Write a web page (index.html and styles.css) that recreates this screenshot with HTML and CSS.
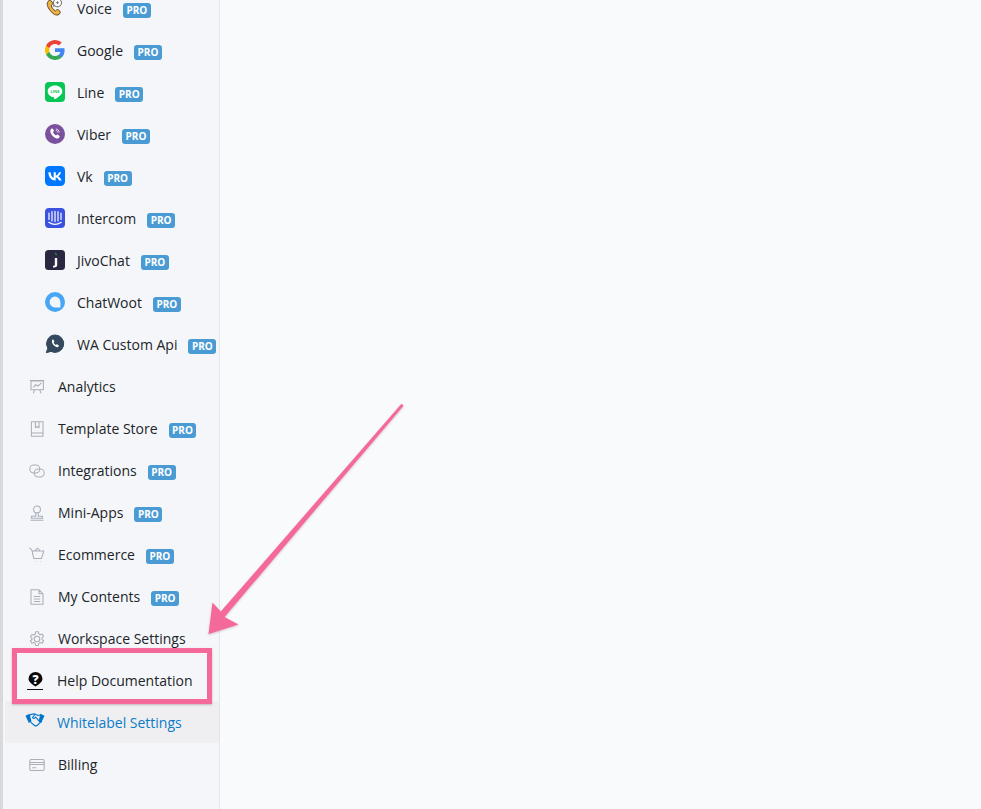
FILE: index.html
```html
<!DOCTYPE html>
<html lang="en">
<head>
<meta charset="utf-8">
<title>Whitelabel Settings</title>
<link rel="stylesheet" href="styles.css">
</head>
<body>
<div class="page">
  <div class="edge"></div>
  <nav class="sidebar">
    <ul class="menu">
      <li class="item sub"><svg class="icon" viewBox="0 0 20 20"><path d="M3 3.500c1-1.300 2.600-1.600 3.300-.6l1.300 2c.4.700.2 1.300-.4 1.800l-1 .8c.6 2.200 2 4.200 4.400 5.400l.9-.9c.6-.6 1.300-.6 1.900-.1l1.600 1.500c.7.800.3 2-1 3-2.500 1.800-6.500-.4-9-4.200C2.300 9.200 1.500 5.400 3 3.500z" fill="#eeb042" stroke="#4a3a1c" stroke-width=".9"/><path d="M12.500.8a4 4 0 1 1-2.600 7l-1.400.5.500-1.400a4 4 0 0 1 3.500-6.100z" fill="#fff" stroke="#555" stroke-width=".9"/><path d="M10.800 4.700h3.200M12.500 3v3.200" stroke="#666" stroke-width=".8"/></svg><span>Voice</span><b class="pro">PRO</b></li>
      <li class="item sub"><svg class="icon" viewBox="0 0 20 20"><path d="M19.600 10.200c0-.7-.1-1.300-.2-1.900H10v3.800h5.400a4.600 4.600 0 0 1-2 3v2.500h3.200c1.900-1.700 3-4.300 3-7.400z" fill="#4285f4"/><path d="M10 20c2.700 0 5-.9 6.600-2.400l-3.200-2.500c-.9.600-2 1-3.400 1-2.600 0-4.800-1.800-5.600-4.100H1.100v2.600A10 10 0 0 0 10 20z" fill="#34a853"/><path d="M4.400 12a6 6 0 0 1 0-3.900V5.500H1.100a10 10 0 0 0 0 9.100z" fill="#fbbc05"/><path d="M10 4c1.500 0 2.800.5 3.800 1.500l2.900-2.900A10 10 0 0 0 1.100 5.500l3.300 2.600C5.200 5.800 7.400 4 10 4z" fill="#ea4335"/></svg><span>Google</span><b class="pro">PRO</b></li>
      <li class="item sub"><svg class="icon" viewBox="0 0 20 20"><rect width="20" height="20" rx="4" fill="#06c755"/><path d="M10 3.500c-4.100 0-7.300 2.600-7.300 5.900 0 2.900 2.600 5.400 6.100 5.800.6.200.4 1 .3 1.600 0 .5.400.5.800.3 2.500-1.300 7.400-4.400 7.400-7.700 0-3.300-3.200-5.900-7.300-5.900z" fill="#fff"/><text class="line-text" x="10" y="10.900" text-anchor="middle">LINE</text></svg><span>Line</span><b class="pro">PRO</b></li>
      <li class="item sub"><svg class="icon" viewBox="0 0 20 20"><circle cx="10" cy="10" r="10" fill="#7b519d"/><path d="M6.300 4.800c.6-.5 1.300-.4 1.700.2l.8 1.300c.3.500.2 1-.2 1.300l-.6.500c.5 1.400 1.600 2.700 3 3.400l.6-.6c.4-.4.900-.4 1.300-.1l1.300 1c.5.400.6 1.100.1 1.700-.9 1.100-2.300 1.200-3.800.4C7.800 12.800 5.300 9.800 5.300 7c0-.9.300-1.700 1-2.200z" fill="#fff"/><path d="M10.800 5c2 .1 3.300 1.500 3.400 3.500M10.800 6.500c1.100.1 1.800.9 1.900 2" fill="none" stroke="#fff" stroke-width=".8"/></svg><span>Viber</span><b class="pro">PRO</b></li>
      <li class="item sub"><svg class="icon" viewBox="0 0 20 20"><rect width="20" height="20" rx="4.500" fill="#0077ff"/><path d="M10.600 14.400C6.100 14.400 3.500 11.300 3.400 6.200h2.300c.1 3.700 1.700 5.300 3 5.600V6.200h2.100v3.200c1.300-.1 2.700-1.600 3.100-3.200H16c-.4 2-1.900 3.500-3 4.100 1.100.5 2.800 1.800 3.500 4.100h-2.400c-.5-1.600-1.800-2.800-3.400-3v3z" fill="#fff"/></svg><span>Vk</span><b class="pro">PRO</b></li>
      <li class="item sub"><svg class="icon" viewBox="0 0 20 20"><rect width="20" height="20" rx="4" fill="#3b52e0"/><path d="M4 5v6.500M7 3.700v9.300M10 3.300v10.300M13 3.700v9.300M16 5v6.500" stroke="#fff" stroke-width="1.200" stroke-linecap="round" fill="none"/><path d="M3.800 14.300c3.800 2.600 8.600 2.600 12.400 0" stroke="#fff" stroke-width="1.200" stroke-linecap="round" fill="none"/></svg><span>Intercom</span><b class="pro">PRO</b></li>
      <li class="item sub"><svg class="icon" viewBox="0 0 20 20"><rect width="20" height="20" rx="3.500" fill="#2a2740"/><path d="M9.800 8h2.400v7c0 1.800-1.300 2.700-4.200 2.400v-1.600c1.400.1 1.800-.2 1.800-1z" fill="#fff"/><path d="M10.200 2.500c1 .5 1.600 1.500 1.500 3-1-.5-1.600-1.500-1.500-3z" fill="#3fae5a"/></svg><span>JivoChat</span><b class="pro">PRO</b></li>
      <li class="item sub"><svg class="icon" viewBox="0 0 20 20"><circle cx="10" cy="10" r="10" fill="#47a7f6"/><path d="M10 4.600a5.400 5.400 0 1 0 0 10.800h5.400V10A5.400 5.400 0 0 0 10 4.600z" fill="#f5f6f9"/></svg><span>ChatWoot</span><b class="pro">PRO</b></li>
      <li class="item sub"><svg class="icon" viewBox="0 0 20 20"><path d="M10.300 1a8.700 8.700 0 0 0-7.500 13.200L1.300 18.700l4.700-1.300A8.700 8.700 0 1 0 10.300 1z" fill="#34495e" stroke="#34495e"/><path d="M7.300 5.800c.5-.4 1-.3 1.300.2l.6 1.100c.2.400.1.800-.2 1.100l-.4.400c.5 1 1.300 1.900 2.300 2.400l.5-.5c.3-.3.700-.3 1-.1l1.100.8c.4.300.5.800.1 1.300-.7.800-1.700.9-2.800.3-2-1-3.900-3.300-3.900-5.300 0-.7.200-1.300.5-1.700z" fill="#fff"/></svg><span>WA Custom Api</span><b class="pro">PRO</b></li>
      <li class="item"><svg class="icon line" viewBox="0 0 20 20"><path d="M2.500 2.500h15.500v11H2.500zM1 2h18M7 13.500l-1.500 4.500M13.500 13.500l1.500 4.500M5.500 10.500l3-3.500 2.500 2 4.500-4"/></svg><span>Analytics</span></li>
      <li class="item"><svg class="icon line" viewBox="0 0 20 20"><path d="M3 1h14.500v18H3zM3 15h14.500M8 1v7.500l2.300-1.800 2.200 1.800V1"/></svg><span>Template Store</span><b class="pro">PRO</b></li>
      <li class="item"><svg class="icon line" viewBox="0 0 20 20"><rect x="1" y="2.500" width="12.500" height="10" rx="5"/><rect x="6.500" y="7.500" width="12.500" height="10" rx="5"/></svg><span>Integrations</span><b class="pro">PRO</b></li>
      <li class="item"><svg class="icon line" viewBox="0 0 20 20"><circle cx="10" cy="5.500" r="4.300"/><path d="M8.500 9.500v4.500h-5.500v2.500h14V14h-5.500V9.500M2 19h16"/></svg><span>Mini-Apps</span><b class="pro">PRO</b></li>
      <li class="item"><svg class="icon line" viewBox="0 0 20 20"><path d="M.5 1l3 2.500L6 14.500h9.500L18.500 5H4.200M7 5l3.500-3.500L14 5M7.500 18h.6M14.500 18h.6"/></svg><span>Ecommerce</span><b class="pro">PRO</b></li>
      <li class="item"><svg class="icon line" viewBox="0 0 20 20"><path d="M2.500 1h10l5 5v13h-15zM12.500 1v5h5M6 9.500h8M6 12.500h8M6 15.500h8"/></svg><span>My Contents</span><b class="pro">PRO</b></li>
      <li class="item"><svg class="icon line" viewBox="0 0 20 20"><circle cx="10" cy="10" r="3.500"/><path d="M8.300 1h3.400l.5 2.500 1.900 1.100 2.400-.8 1.700 3-1.900 1.600v2.200l1.900 1.600-1.700 3-2.400-.8-1.900 1.100-.5 2.500H8.300l-.5-2.500-1.900-1.100-2.400.8-1.700-3 1.900-1.600V8.900L1.800 7.300l1.700-3 2.400.8 1.900-1.100z"/></svg><span>Workspace Settings</span></li>
      <li class="item help"><svg class="icon" viewBox="0 0 20 20"><path d="M7.500 2a7 7 0 0 1 7 7c0 2.500-3 5-7 7.500-4-2.500-7-5-7-7.500a7 7 0 0 1 7-7z" fill="#0a0a0a"/><text class="help-mark" x="7.500" y="13.500" text-anchor="middle">?</text><path d="M-1 19.500h16" stroke="#111" stroke-width="1"/></svg><span>Help Documentation</span></li>
      <li class="item active"><svg class="icon shake" viewBox="0 2.500 20 11.500" preserveAspectRatio="none"><path d="M.5 5.500l4-1.500 2 6-2.700 1.500zM19.500 5.500l-4-1.500-2 6 2.700 1.500z" fill="#0077cc"/><path d="M4.500 5c2-.3 3.500-1.500 5.500-.8l2.500 1c1 .3 2 0 3-.4l.7 5.500-3.500 2.900c-1 .9-2.200.9-3.200.3L5.500 10.800" fill="none" stroke="#0077cc" stroke-width="1"/><path d="M10 4.500L7.500 7c.8 1.200 2.200 1 3.200-.3l4 3.800" fill="none" stroke="#0077cc" stroke-width="1"/></svg><span>Whitelabel Settings</span></li>
      <li class="item"><svg class="icon line" viewBox="0 0 20 20"><rect x="1" y="3" width="18" height="14" rx="2"/><path d="M1 7h18M1 9.500h18M4 13.500h5"/></svg><span>Billing</span></li>
    </ul>
  </nav>
  <main class="content"></main>
  <div class="callout"></div>
  <svg class="arrow" viewBox="0 0 981 809"><path d="M401.500 403.800L403.500 405.700 224.500 617 238.500 624.500 208.500 634 212.500 602.500 220.800 611.500z"/></svg>
</div>
</body>
</html>
```
FILE: styles.css
```css
* { box-sizing: border-box; }
html, body { margin: 0; padding: 0; height: 100%; overflow: hidden; }
.page {
  position: relative;
  display: flex;
  width: 981px;
  height: 809px;
  overflow: hidden;
  background: #f9fafc;
  font-family: "Open Sans", "Liberation Sans", sans-serif;
  font-size: 14px;
  color: #212529;
}
.edge { flex: 0 0 3px; background: #d9d9dc; }
.sidebar {
  flex: 0 0 217px;
  background: #f5f6f9;
  border-right: 1px solid #e3e5ea;
  padding-left: 2px;
}
.menu { list-style: none; margin: -13px 0 0; padding: 0; }
.item {
  display: flex;
  align-items: center;
  height: 42px;
  padding-left: 24px;
  white-space: nowrap;
}
.item.sub { padding-left: 40px; }
.icon { flex: 0 0 auto; overflow: visible; }
.item .icon { width: 20px; height: 20px; margin-right: 9px; }
.item.sub .icon { margin-right: 12px; }
.item .line { width: 16px; height: 16px; margin: 1px 13px 0 0; }
.line { fill: none; stroke: #a9aeb8; stroke-width: 1.300; stroke-linejoin: round; }
.line-text { font-size: 4px; font-weight: 700; fill: #06c755; }
.help-mark { font-size: 12px; font-weight: 800; fill: #fff; }
.pro {
  display: inline-block;
  margin-left: 11px;
  margin-top: 4px;
  padding: 0 3.500px;
  height: 15px;
  line-height: 15px;
  border-radius: 3px;
  background: #4a9bd4;
  color: #fff;
  font-size: 10px;
  font-weight: 700;
}
.help { padding-left: 23px; }
.active { background: #efeff1; color: #0b7bc8; padding-left: 20px; }
.item.active .shake { height: 14px; margin-right: 12px; margin-top: -6px; }
.callout {
  position: absolute;
  left: 12px;
  top: 648px;
  width: 200px;
  height: 56px;
  border: 5px solid #f4689a;
  box-shadow: 0 1px 2px rgba(120, 60, 80, .35);
}
.arrow {
  position: absolute;
  left: 0;
  top: 0;
  width: 981px;
  height: 809px;
  fill: #f4689a;
  filter: drop-shadow(0 1px 1px rgba(120, 60, 80, .3));
}
.content { flex: 1; }
```
